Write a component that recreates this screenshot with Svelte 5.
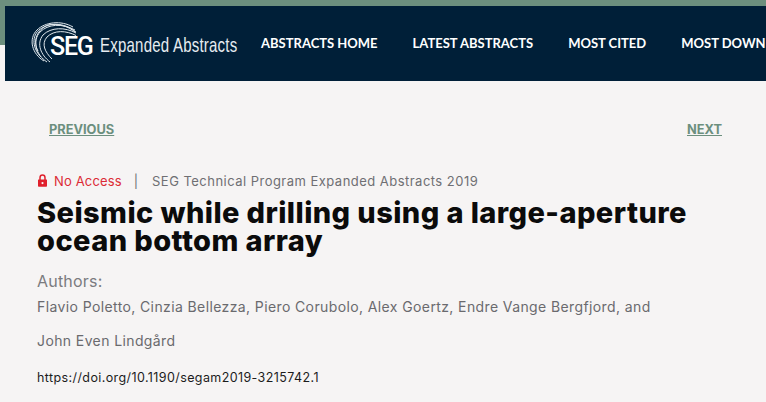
<script>
  const nav = ['ABSTRACTS HOME', 'LATEST ABSTRACTS', 'MOST CITED', 'MOST DOWNLOADED'];
  const arcs = [
    'M15 40C3 33 -1 18 8 9C16 1 32 -1 44 6',
    'M18 41C7 34 3 20 11 11C19 3 33 2 46 9',
    'M12 36C2 26 3 12 13 7C23 1 37 2 48 12',
    'M21 41C12 34 7 23 14 14C22 6 36 6 47 12',
    'M9 30C3 19 9 8 19 4C28 2 39 5 46 11',
    'M23 38C16 31 12 23 18 16C25 9 37 9 48 15'
  ];
</script>

<div class="page">
  <header class="bar">
    <a class="logo" href="#top">
      <svg class="globe" width="46" height="44" viewBox="1 -1 46 44" fill="none" stroke="#dfe7ec" stroke-width="1">
        {#each arcs as d}<path {d} />{/each}
      </svg>
      <span class="seg">SEG</span>
      <span class="tag">Expanded Abstracts</span>
    </a>
    <nav class="nav">
      {#each nav as item}<a href="#top">{item}</a>{/each}
    </nav>
  </header>

  <main class="content">
    <div class="pager">
      <a href="#top">PREVIOUS</a>
      <a href="#top">NEXT</a>
    </div>

    <div class="meta">
      <svg class="lock" width="11" height="13" viewBox="0 0 11 13">
        <path d="M3 6V3.700a2.500 2.700 0 0 1 5 0V6" fill="none" stroke="#e0202c" stroke-width="1.500" />
        <path fill-rule="evenodd" fill="#e0202c" d="M1.500 5.500h8a.5.5 0 0 1 .5.5v6a.8.8 0 0 1-.8.8H1.800a.8.8 0 0 1-.8-.8V6a.5.5 0 0 1 .5-.5ZM5.500 8a1.100 1.100 0 1 0 0 2.200a1.100 1.100 0 0 0 0-2.200Z" />
      </svg>
      <span class="access">No Access</span>
      <span class="sep">|</span>
      <span class="source">SEG Technical Program Expanded Abstracts 2019</span>
    </div>

    <h1>Seismic while drilling using a large-aperture<br />ocean bottom array</h1>

    <div class="authors-label">Authors:</div>
    <p class="authors">Flavio Poletto, Cinzia Bellezza, Piero Corubolo, Alex Goertz, Endre Vange Bergfjord, and</p>
    <p class="authors">John Even Lindgård</p>
    <p class="doi">https://doi.org/10.1190/segam2019-3215742.1</p>
  </main>
</div>

<style>
  :global(body) {
    margin: 0;
    background: #f6f4f4;
    overflow: hidden;
  }
  .page {
    width: 766px;
    height: 402px;
    overflow: hidden;
    padding: 6px 0 0 5px;
    box-sizing: border-box;
    background: linear-gradient(#6c8f7e 45px, transparent 45px);
    font-family: Inter, "Noto Sans", sans-serif;
  }
  .bar {
    display: flex;
    align-items: center;
    height: 75px;
    background: #001f38;
    white-space: nowrap;
  }
  .logo {
    display: flex;
    align-items: center;
    margin-left: 25px;
    width: 231px;
    flex: none;
    text-decoration: none;
    color: #e6ecf0;
  }
  .globe { flex: none; margin-right: -26px; margin-top: -4px; }
  .seg {
    font: 500 25px Roboto, sans-serif;
    letter-spacing: -1.200px;
    color: #fff;
    margin: 6px 7px 0 0;
  }
  .tag {
    font: 400 21px "Liberation Sans", sans-serif;
    transform: scaleX(0.715);
    transform-origin: left center;
    letter-spacing: 0.3px;
    margin-top: 3px;
  }
  .nav {
    display: flex;
    gap: 35px;
    margin-top: -2px;
  }
  .nav a {
    font: 700 13px Lato, sans-serif;
    color: #fff;
    text-decoration: none;
  }
  .content { padding: 0 44px 0 32px; }
  .pager {
    display: flex;
    justify-content: space-between;
    padding: 41px 0 0 12px;
    line-height: 16px;
  }
  .pager a {
    font-size: 12.800px;
    font-weight: 700;
    color: #6c8f7e;
    text-decoration: underline;
  }
  .meta {
    display: flex;
    align-items: center;
    margin-top: 35px;
    font-size: 13px;
    line-height: 16px;
    color: #6f6f73;
  }
  .lock { margin: -1px 6px 0 0; }
  .access { color: #dc2b36; letter-spacing: 0.15px; }
  .source { letter-spacing: 0.47px; }
  .sep { margin: 0 14px 0 12px; }
  h1 {
    margin: 10px 0 0;
    font-size: 29px;
    line-height: 28px;
    letter-spacing: 0.42px;
    font-weight: 800;
    color: #0b0b0b;
  }
  .authors-label {
    margin-top: 16px;
    font-size: 16px;
    line-height: 20px;
    letter-spacing: 0.2px;
    color: #7b7b7f;
  }
  .authors {
    margin: 6px 0 0;
    font-size: 14px;
    line-height: 20px;
    letter-spacing: 0.39px;
    color: #6a6a6e;
  }
  .authors + .authors { margin-top: 14px; }
  .doi {
    margin: 19px 0 0;
    font-size: 12.500px;
    line-height: 16px;
    letter-spacing: 0.4px;
    color: #1c1c1c;
  }
</style>
